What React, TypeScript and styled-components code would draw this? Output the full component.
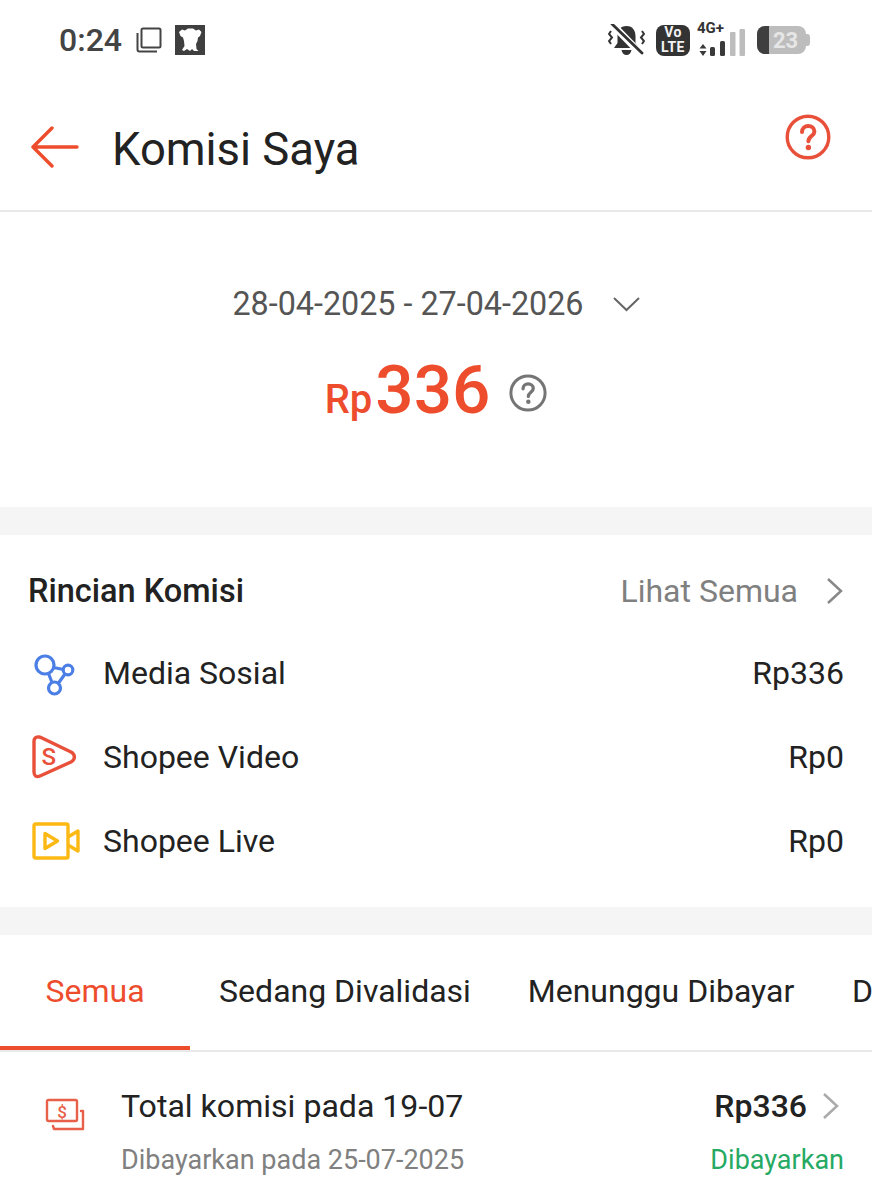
import React from 'react';
import styled, { createGlobalStyle } from 'styled-components';

const GlobalStyle = createGlobalStyle`
  html, body {
    margin: 0;
    padding: 0;
    background: #fff;
  }
  body {
    font-family: Roboto, "Liberation Sans", sans-serif;
    color: #222;
  }
`;

const Page = styled.div`
  width: 872px;
  height: 1200px;
  overflow: hidden;
  background: #fff;
`;

const StatusBar = styled.div`
  height: 80px;
  box-sizing: border-box;
  padding: 0 62px 0 59px;
  display: flex;
  align-items: center;
  justify-content: space-between;
`;

const StatusGroup = styled.div`
  display: flex;
  align-items: center;
`;

const Clock = styled.span`
  font-size: 32px;
  font-weight: 500;
  color: #444;
  margin-right: 14px;
`;

const CopyWrap = styled.span`
  display: flex;
  margin-right: 13px;
`;

const Header = styled.header`
  height: 132px;
  box-sizing: border-box;
  border-bottom: 2px solid #e9e9e9;
  padding: 0 41px 0 31px;
  display: flex;
  align-items: center;
`;

const BackWrap = styled.span`
  display: flex;
  margin-top: 4px;
`;

const Title = styled.h1`
  margin: 8px 0 0 33px;
  flex: 1;
  font-size: 45.4px;
  font-weight: 400;
  color: #222;
`;

const HelpButton = styled.div`
  display: flex;
  margin-top: -16px;
`;

const Summary = styled.section`
  height: 295px;
  box-sizing: border-box;
  padding-top: 71px;
  display: flex;
  flex-direction: column;
  align-items: center;
`;

const DateRow = styled.div`
  display: flex;
  align-items: center;
  gap: 29px;
  font-size: 32.3px;
  color: #555;
  height: 42px;
`;

const AmountRow = styled.div`
  display: flex;
  align-items: baseline;
  margin-top: 25px;
  color: #ee4d2d;
`;

const Currency = styled.span`
  font-size: 40px;
  font-weight: 500;
  margin-right: 3px;
`;

const Amount = styled.span`
  font-size: 67.5px;
  font-weight: 500;
`;

const AmountHelp = styled.span`
  display: flex;
  align-self: center;
  margin: 6px 0 0 19px;
`;

const Band = styled.div`
  height: 28px;
  background: #f5f5f5;
`;

const Details = styled.section`
  height: 372px;
  box-sizing: border-box;
  padding: 34px 28px 0 28px;
`;

const DetailsHead = styled.div`
  display: flex;
  justify-content: space-between;
  align-items: center;
  height: 44px;
  margin-bottom: 18px;
`;

const DetailsTitle = styled.h2`
  margin: 0;
  font-size: 32.5px;
  font-weight: 500;
  color: #222;
`;

const SeeAll = styled.div`
  display: flex;
  align-items: center;
  gap: 28px;
  padding-right: 1px;
  font-size: 32px;
  color: #808080;
`;

const DetailRow = styled.div`
  display: flex;
  align-items: center;
  height: 84px;
  font-size: 32px;
  color: #222;
`;

const DetailIcon = styled.span`
  width: 71px;
  padding-left: 4px;
  display: flex;
`;

const DetailName = styled.span`
  flex: 1;
`;

const Tabs = styled.nav`
  height: 117px;
  box-sizing: border-box;
  border-bottom: 2px solid #e9e9e9;
  display: flex;
  align-items: stretch;
  white-space: nowrap;
  overflow: hidden;
`;

const Tab = styled.div<{ $active?: boolean; $width: number }>`
  flex: 0 0 ${p => p.$width}px;
  box-sizing: border-box;
  display: flex;
  align-items: center;
  justify-content: center;
  font-size: 32px;
  color: ${p => (p.$active ? '#ee4d2d' : '#222')};
  border-bottom: 4px solid ${p => (p.$active ? '#ee4d2d' : 'transparent')};
`;

const LastTab = styled(Tab)`
  justify-content: flex-start;
  padding-left: 30px;
`;

const TotalRow = styled.div`
  display: flex;
  padding: 32px 28px 0 45px;
`;

const TotalIcon = styled.span`
  width: 76px;
  display: flex;
  padding-top: 14px;
`;

const TotalBody = styled.div`
  flex: 1;
`;

const TotalLine = styled.div`
  display: flex;
  justify-content: space-between;
  align-items: center;
  height: 44px;
`;

const TotalName = styled.span`
  font-size: 32.1px;
  color: #222;
`;

const TotalValue = styled.span`
  display: flex;
  align-items: center;
  gap: 15px;
  margin-right: 5px;
  font-size: 32px;
  font-weight: 500;
  color: #222;
`;

const PaidDate = styled.span`
  font-size: 27px;
  color: #808080;
`;

const PaidStatus = styled.span`
  font-size: 27px;
  color: #26aa63;
`;

const SubLine = styled(TotalLine)`
  margin-top: 14px;
  height: 36px;
`;

const BackIcon = () => (
  <svg width="48" height="42" viewBox="0 0 48 42" fill="none" stroke="#ee4d2d" strokeWidth="3.4" strokeLinecap="round" strokeLinejoin="round">
    <path d="M2 21H46M21 2L2 21L21 40" />
  </svg>
);

const Help = ({ size, color, stroke }: { size: number; color: string; stroke: number }) => (
  <svg width={size} height={size} viewBox="0 0 46 46" fill="none">
    <circle cx="23" cy="23" r={22.5 - stroke / 2} stroke={color} strokeWidth={stroke} />
    <path d="M17 18c0-3.600 2.800-6 6.200-6s6.200 2.200 6.200 5.400c0 4.600-6 4.800-6 9.800" stroke={color} strokeWidth="4" strokeLinecap="round" />
    <circle cx="23.400" cy="33.500" r="2.700" fill={color} />
  </svg>
);

const ChevronDown = () => (
  <svg width="27" height="16" viewBox="0 0 27 16" fill="none" stroke="#666" strokeWidth="2">
    <path d="M1 2L13.500 14L26 2" />
  </svg>
);

const ChevronRight = ({ color = '#888' }: { color?: string }) => (
  <svg width="17" height="28" viewBox="0 0 17 28" fill="none" stroke={color} strokeWidth="2.5">
    <path d="M2 2L15 14L2 26" />
  </svg>
);

const SocialIcon = () => (
  <svg width="44" height="46" viewBox="0 0 44 46" fill="none" stroke="#4c7fe6" strokeWidth="3.2">
    <circle cx="13" cy="15" r="9" />
    <circle cx="36" cy="20" r="4.800" />
    <circle cx="22.500" cy="38" r="6" />
    <path d="M21.500 17.500L31.500 19.500M16.500 23.500L20 32.500M33 24L26.500 33" />
  </svg>
);

const VideoIcon = () => (
  <svg width="44" height="44" viewBox="0 0 44 44" fill="none" stroke="#e8503a" strokeWidth="3.400" strokeLinejoin="round">
    <path d="M7 2C3.500 1.500 2 3.500 2 6.500V37C2 41 4.500 42.500 8 41L39 27C43.500 24.500 43.500 19.500 39 17L10 3C9 2.500 8 2.200 7 2Z" />
    <text x="9.500" y="30" fontFamily="Roboto, sans-serif" fontSize="24" fontWeight="500" fill="#e8503a" stroke="none">S</text>
  </svg>
);

const LiveIcon = () => (
  <svg width="48" height="38" viewBox="0 0 48 38" fill="none" stroke="#fdb913" strokeWidth="3.400" strokeLinejoin="round">
    <rect x="2" y="2" width="34" height="34" rx="1.500" />
    <path d="M36 15L46 9V29L36 23" />
    <path d="M13 11.500L25.500 19L13 26.500Z" />
  </svg>
);

const MoneyIcon = () => (
  <svg width="40" height="36" viewBox="0 0 40 36" fill="none" stroke="#e8604a" strokeWidth="2.400" strokeLinejoin="round">
    <rect x="2" y="2" width="30" height="21" rx="1.500" />
    <path d="M36 13H38V31H9L8 28" strokeLinecap="round" />
    <text x="17" y="19.500" textAnchor="middle" fontFamily="Roboto, sans-serif" fontSize="17" fontWeight="500" fill="#e8604a" stroke="none">$</text>
  </svg>
);

const CopyIcon = () => (
  <svg width="26" height="26" viewBox="0 0 26 26" fill="none" stroke="#444" strokeWidth="2">
    <rect x="5.500" y="1.500" width="19" height="19" rx="1.500" />
    <path d="M1.500 6V22.500C1.500 23.800 2.200 24.500 3.500 24.500H21" />
  </svg>
);

const AppBadge = () => (
  <svg width="30" height="30" viewBox="0 0 30 30">
    <rect width="30" height="30" fill="#3f3f3f" />
    <path d="M4 7L7 4.500L10 5.500L13 3.500L18 3.500L21 5.500L24 4.500L26.500 7L25 11L23 12.500L22.500 16L21 19L21.500 24L23.500 26L19 26L17 24L15 26L12 24L9 26L7 25L9.500 21L9 16L8 12.500L5.500 11Z" fill="#fff" />
  </svg>
);

const MuteIcon = () => (
  <svg width="37" height="32" viewBox="0 0 37 32" fill="none">
    <path d="M18.500 2C12 2 9.500 7 9.500 12V19L6 24H31L27.500 19V12C27.500 7 25 2 18.500 2Z" fill="#333" />
    <path d="M13.500 26H23.500C23 29 21 31 18.500 31S14 29 13.500 26Z" fill="#333" />
    <path d="M3 -1L34 31" stroke="#fff" strokeWidth="7" />
    <path d="M4 0L34 29" stroke="#333" strokeWidth="2.800" strokeLinecap="round" />
    <path d="M3 7L1 10L4 13.500L1 17L3 20M34 7L36 10L33 13.500L36 17L34 20" stroke="#333" strokeWidth="2" />
  </svg>
);

const VolteBadge = styled.span`
  width: 34px;
  height: 31px;
  margin-left: 11px;
  border-radius: 8px;
  background: #333;
  color: #f2f2f2;
  font-size: 14px;
  line-height: 15px;
  letter-spacing: 0.4px;
  font-weight: 700;
  text-align: center;
  display: flex;
  flex-direction: column;
  justify-content: center;
`;

const SignalBox = styled.div`
  position: relative;
  width: 50px;
  height: 32px;
  margin-left: 6px;
  display: flex;
  align-items: flex-end;
  justify-content: flex-end;
`;

const NetLabel = styled.span`
  position: absolute;
  left: 1px;
  top: -5px;
  font-size: 15px;
  font-weight: 700;
  color: #333;
`;

const BatteryBody = styled.div`
  position: relative;
  width: 49px;
  height: 28px;
  margin-left: 11px;
  border-radius: 8px;
  background: #bdbdbd;
  overflow: hidden;
  display: flex;
  align-items: center;
  justify-content: center;
  font-size: 22px;
  font-weight: 700;
  color: #e6e6e6;
`;

const BatteryFill = styled.span`
  position: absolute;
  left: 0;
  top: 0;
  bottom: 0;
  width: 12px;
  background: #3f3f3f;
`;

const BatteryLevel = styled.span`
  position: relative;
  margin-left: 8px;
`;

const BatteryTip = styled.span`
  width: 4px;
  height: 12px;
  background: #bdbdbd;
  border-radius: 0 3px 3px 0;
`;

const SignalBars = () => (
  <svg width="50" height="27" viewBox="0 0 50 27">
    <path d="M7 15L10.500 19.500H3.500ZM7 27L10.500 22H3.500Z" fill="#3a3a3a" />
    <rect x="14" y="18" width="5" height="9" rx="1.500" fill="#3a3a3a" />
    <rect x="24" y="12" width="5" height="15" rx="1.500" fill="#3a3a3a" />
    <rect x="34" y="3" width="5.500" height="24" rx="1" fill="#bdbdbd" />
    <rect x="43.500" y="0" width="5.500" height="27" rx="1" fill="#bdbdbd" />
  </svg>
);

const rows = [
  { name: 'Media Sosial', value: 'Rp336', icon: <SocialIcon /> },
  { name: 'Shopee Video', value: 'Rp0', icon: <VideoIcon /> },
  { name: 'Shopee Live', value: 'Rp0', icon: <LiveIcon /> },
];

const App: React.FC = () => {
  return (
    <Page>
      <GlobalStyle />
      <StatusBar>
        <StatusGroup>
          <Clock>0:24</Clock>
          <CopyWrap>
            <CopyIcon />
          </CopyWrap>
          <AppBadge />
        </StatusGroup>
        <StatusGroup>
          <MuteIcon />
          <VolteBadge>
            <span>Vo</span>
            <span>LTE</span>
          </VolteBadge>
          <SignalBox>
            <NetLabel>4G+</NetLabel>
            <SignalBars />
          </SignalBox>
          <BatteryBody>
            <BatteryFill />
            <BatteryLevel>23</BatteryLevel>
          </BatteryBody>
          <BatteryTip />
        </StatusGroup>
      </StatusBar>

      <Header>
        <BackWrap>
          <BackIcon />
        </BackWrap>
        <Title>Komisi Saya</Title>
        <HelpButton>
          <Help size={46} color="#e8503a" stroke={3.4} />
        </HelpButton>
      </Header>

      <Summary>
        <DateRow>
          <span>28-04-2025 - 27-04-2026</span>
          <ChevronDown />
        </DateRow>
        <AmountRow>
          <Currency>Rp</Currency>
          <Amount>336</Amount>
          <AmountHelp>
            <Help size={38} color="#757575" stroke={3.6} />
          </AmountHelp>
        </AmountRow>
      </Summary>

      <Band />

      <Details>
        <DetailsHead>
          <DetailsTitle>Rincian Komisi</DetailsTitle>
          <SeeAll>
            <span>Lihat Semua</span>
            <ChevronRight />
          </SeeAll>
        </DetailsHead>
        {rows.map(r => (
          <DetailRow key={r.name}>
            <DetailIcon>{r.icon}</DetailIcon>
            <DetailName>{r.name}</DetailName>
            <span>{r.value}</span>
          </DetailRow>
        ))}
      </Details>

      <Band />

      <Tabs>
        <Tab $active $width={190}>Semua</Tab>
        <Tab $width={310}>Sedang Divalidasi</Tab>
        <Tab $width={322}>Menunggu Dibayar</Tab>
        <LastTab $width={50}>Dibayarkan</LastTab>
      </Tabs>

      <TotalRow>
        <TotalIcon>
          <MoneyIcon />
        </TotalIcon>
        <TotalBody>
          <TotalLine>
            <TotalName>Total komisi pada 19-07</TotalName>
            <TotalValue>
              Rp336
              <ChevronRight color="#aaa" />
            </TotalValue>
          </TotalLine>
          <SubLine>
            <PaidDate>Dibayarkan pada 25-07-2025</PaidDate>
            <PaidStatus>Dibayarkan</PaidStatus>
          </SubLine>
        </TotalBody>
      </TotalRow>
    </Page>
  );
};

export default App;
